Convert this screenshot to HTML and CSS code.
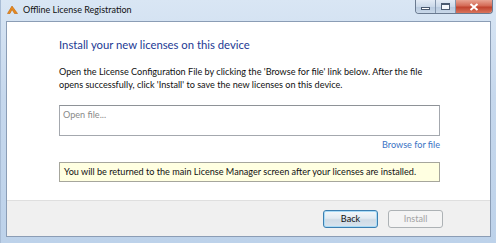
FILE: index.html
```html
<!DOCTYPE html>
<html lang="en">
  <head>
    <meta charset="UTF-8">
    <title>Offline License Registration</title>
    <link rel="stylesheet" href="styles.css">
  </head>
  <body>
    <div class="window">
      <div class="title-bar">
        <svg class="app-icon" width="11" height="9" viewBox="0 0 11 9">
          <path d="M0.5 8.5 L5 1 L10.5 8.5 L7.5 8.5 L5 4.5 L3 8.5 Z" fill="#e98a1e" stroke="#c0650a" stroke-width="0.6"/>
        </svg>
        <span class="title-text">Offline License Registration</span>
        <div class="caption-buttons">
          <div class="caption-btn btn-min"><span class="min-glyph"></span></div>
          <div class="caption-btn btn-max"><span class="max-glyph"></span></div>
          <div class="caption-btn btn-close">
            <svg width="10" height="8" viewBox="0 0 10 8">
              <path d="M1.5 1 L8.5 7 M8.5 1 L1.5 7" stroke="#fff" stroke-width="2"/>
            </svg>
          </div>
        </div>
      </div>
      <div class="client">
        <div class="main">
          <h1 class="main-instruction">Install your new licenses on this device</h1>
          <p class="desc">Open the License Configuration File by clicking the 'Browse for file' link below. After the file opens successfully, click 'Install' to save the new licenses on this device.</p>
          <div class="file-box">Open file...</div>
          <div class="browse-row"><a class="browse-link">Browse for file</a></div>
          <div class="info-box">You will be returned to the main License Manager screen after your licenses are installed.</div>
        </div>
        <div class="footer">
          <button class="btn btn-default">Back</button>
          <button class="btn btn-disabled">Install</button>
        </div>
      </div>
    </div>
  </body>
</html>
```

FILE: styles.css
```css
* {
  margin: 0;
  padding: 0;
  box-sizing: border-box;
}
body {
  width: 496px;
  height: 243px;
  overflow: hidden;
  font-family: Lato, "Open Sans", sans-serif;
  color: #1a1a1a;
  background: #c4d7ec;
}
.window {
  width: 496px;
  height: 243px;
  display: flex;
  flex-direction: column;
  padding: 0 5px 6px 5px;
  background: linear-gradient(180deg, #d9e6f4 0%, #c6d8ed 40%, #bdd2ea 100%);
  border-left: 1px solid #a9bdd6;
}
.title-bar {
  height: 21px;
  display: flex;
  align-items: flex-start;
  flex-shrink: 0;
}
.app-icon {
  margin: 5px 0 0 1px;
}
.title-text {
  margin: 4px 0 0 5px;
  font-size: 9px;
  color: #111;
}
.caption-buttons {
  margin-left: auto;
  margin-right: -2px;
  display: flex;
  flex-shrink: 0;
  height: 14px;
  border: 1px solid #6a7a90;
  border-top: none;
  border-radius: 0 0 4px 4px;
  overflow: hidden;
}
.caption-btn {
  display: flex;
  flex-shrink: 0;
  align-items: center;
  justify-content: center;
}
.btn-min, .btn-max {
  width: 20px;
  background: linear-gradient(180deg, #e3ebf5 0%, #cbd9e9 50%, #b7c9de 51%, #c9d8e9 100%);
  border-right: 1px solid #8294ab;
}
.min-glyph {
  width: 9px;
  height: 3px;
  margin-top: 3px;
  border: 1px solid #4a5a70;
  background: #fff;
}
.max-glyph {
  width: 9px;
  height: 7px;
  border: 1px solid #4a5a70;
  border-top-width: 2px;
  background: #f4f7fb;
}
.btn-close {
  width: 36px;
  background: linear-gradient(180deg, #e8a493 0%, #d46a55 45%, #c0432e 55%, #d9745c 100%);
}
.client {
  flex: 1;
  display: flex;
  flex-direction: column;
  background: #fff;
  border: 1px solid #8b9db5;
}
.main {
  flex: 1;
  padding: 15px 0 0 52px;
  width: 433px;
}
.main-instruction {
  font-weight: normal;
  font-size: 11.3px;
  color: #1c3a94;
  line-height: 16px;
}
.desc {
  margin-top: 12px;
  font-size: 9.1px;
  line-height: 13px;
  color: #111;
}
.file-box {
  margin-top: 14px;
  height: 31px;
  border: 1px solid #a4a8ae;
  border-top-color: #8e9297;
  padding: 3px 3px;
  font-size: 9.1px;
  color: #8a8a8a;
}
.browse-row {
  display: flex;
  justify-content: flex-end;
  margin-top: 2px;
}
.browse-link {
  font-size: 9.1px;
  color: #3a73c4;
  line-height: 14px;
}
.info-box {
  margin-top: 10px;
  height: 20px;
  border: 1px solid #a6a69c;
  background: #ffffe1;
  padding: 3px 4px;
  font-size: 9.1px;
  line-height: 12px;
  color: #111;
  white-space: nowrap;
}
.footer {
  height: 36px;
  flex-shrink: 0;
  background: #f0f0f0;
  border-top: 1px solid #dfdfdf;
  display: flex;
  justify-content: flex-end;
  align-items: center;
  gap: 10px;
  padding: 0 47px 0 0;
}
.btn {
  width: 55px;
  height: 18px;
  font-family: inherit;
  font-size: 9.1px;
  border-radius: 3px;
}
.btn-default {
  border: 1px solid #3c7fb1;
  background: linear-gradient(180deg, #f3f7fa 0%, #e2ebf2 45%, #cfdbe6 55%, #d9e4ee 100%);
  box-shadow: inset 0 0 0 1px #a9dbf6;
  color: #111;
}
.btn-disabled {
  border: 1px solid #adb2b5;
  background: #f4f4f4;
  color: #a3a3a3;
}
```
